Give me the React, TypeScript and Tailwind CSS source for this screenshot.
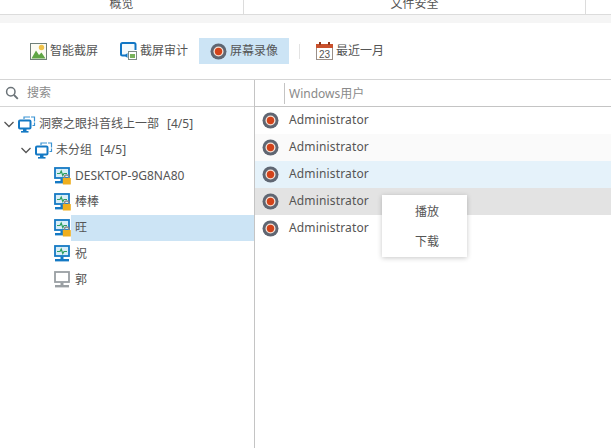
const font = { fontFamily: '"Noto Sans", "Noto Sans CJK SC", sans-serif' };

function PictureIcon() {
  return (
    <svg width="17" height="17" viewBox="0 0 17 17">
      <rect x="0.5" y="0.5" width="16" height="16" fill="#fbfbf3" stroke="#6f7f78" />
      <circle cx="11.5" cy="4.5" r="2.7" fill="#efc24b" />
      <path d="M1.5 15.5 L6 7.5 L9 12 L11.5 9.5 L15.5 15.5 Z" fill="#5fa544" />
    </svg>
  );
}

function AuditIcon() {
  return (
    <svg width="17" height="18" viewBox="0 0 17 18">
      <path d="M7 13.5 H2.5 Q1 13.5 1 12 V2.5 Q1 1 2.5 1 H14 Q15.5 1 15.5 2.5 V8" fill="#f4fafd" stroke="#1176c4" strokeWidth="2" />
      <path d="M4.5 13.5 L7.5 11 V16 Z" fill="#1176c4" />
      <rect x="8.5" y="9.5" width="8" height="8" fill="#fff" stroke="#7d8c84" />
      <rect x="10" y="12" width="5" height="4" fill="#79b35c" />
    </svg>
  );
}

function RecordIcon() {
  return (
    <svg width="17" height="17" viewBox="0 0 17 17">
      <circle cx="8.5" cy="8.5" r="8" fill="#5f6672" />
      <circle cx="8.5" cy="8.5" r="5" fill="#f6e3d8" />
      <circle cx="8.5" cy="8.5" r="3.7" fill="#d2431a" />
    </svg>
  );
}

function CalendarIcon() {
  return (
    <svg width="17" height="18" viewBox="0 0 17 18">
      <rect x="0.5" y="2.5" width="16" height="15" fill="#fff" stroke="#9a8f88" />
      <rect x="0" y="2" width="17" height="4" fill="#c9502c" />
      <rect x="3" y="0" width="2" height="3" fill="#8f3a20" />
      <rect x="12" y="0" width="2" height="3" fill="#8f3a20" />
      <text x="8.5" y="15.5" textAnchor="middle" fontSize="10" fill="#555" fontFamily="Liberation Sans, sans-serif">23</text>
    </svg>
  );
}

function GroupIcon() {
  return (
    <svg width="18" height="17" viewBox="0 0 18 17">
      <path d="M6 3 V1 H16.5 V9.5 H14.5" fill="none" stroke="#3a93d3" strokeWidth="1.2" strokeDasharray="8 1" />
      <rect x="1" y="4.5" width="11.5" height="8" rx="1" fill="#fff" stroke="#1479c4" strokeWidth="2" />
      <rect x="5" y="13" width="3.5" height="2" fill="#1479c4" />
      <rect x="3" y="15" width="7.5" height="1.6" fill="#1479c4" />
    </svg>
  );
}

function HostIcon({ locked = false, offline = false }: { locked?: boolean; offline?: boolean }) {
  const c = offline ? "#9a9fa3" : "#1479c4";
  return (
    <svg width="18" height="18" viewBox="0 0 18 18">
      <rect x="1" y="1" width="14" height="10" fill={offline ? "#fff" : "#d9eef8"} stroke={c} strokeWidth="1.8" />
      {!offline && <path d="M3 6.5 H6 L7.2 4 L8.8 8.5 L10 6.5 H13" fill="none" stroke="#2f9f63" strokeWidth="1.2" />}
      <rect x="6.5" y="11.5" width="3" height="2.5" fill={c} />
      <rect x="1" y="14" width="14" height="2.4" fill={c} />
      {locked && (
        <g>
          <path d="M10.5 11.5 V10 Q10.5 8 12.7 8 Q14.9 8 14.9 10 V11.5" fill="none" stroke="#8a8a8a" strokeWidth="1.4" />
          <rect x="8.8" y="11" width="8" height="6.6" rx="0.5" fill="#eeae1e" />
        </g>
      )}
    </svg>
  );
}

function Chevron() {
  return (
    <svg width="12" height="12" viewBox="0 0 12 12">
      <path d="M1.5 4 L6 8.5 L10.5 4" fill="none" stroke="#555" strokeWidth="1.3" />
    </svg>
  );
}

function SearchIcon() {
  return (
    <svg width="14" height="14" viewBox="0 0 14 14">
      <circle cx="5.8" cy="5.8" r="4.2" fill="none" stroke="#6b7378" strokeWidth="1.5" />
      <path d="M9 9 L12.8 12.8" stroke="#6b7378" strokeWidth="1.8" />
    </svg>
  );
}

const hosts = [
  { name: "DESKTOP-9G8NA80", locked: true },
  { name: "棒棒", locked: true },
  { name: "旺", locked: true, selected: true },
  { name: "祝" },
  { name: "郭", offline: true },
];

const rowColors = ["bg-white", "bg-[#fafafa]", "bg-[#e5f2fa]", "bg-[#e3e3e3]", "bg-white"];

export default function App() {
  return (
    <div className="relative flex h-[448px] w-[611px] flex-col overflow-hidden bg-white text-[12px] text-[#555]" style={font}>
      <div className="flex h-[15px] shrink-0 items-end overflow-hidden border-b border-[#dcdcdc] text-[#555]">
        <div className="flex h-[14px] w-[244px] items-end justify-center border-r border-[#dcdcdc] pb-[1px] leading-[18px]">概览</div>
        <div className="flex h-[14px] w-[342px] items-end justify-center border-r border-[#dcdcdc] pb-[1px] leading-[18px]">文件安全</div>
      </div>
      <div className="h-[8px] shrink-0 bg-[#f5f5f5]" />

      <div className="flex h-[57px] shrink-0 items-center border-b border-[#d5d5d5] pl-[20px]">
        <div className="flex h-[26px] items-center gap-[3px] pl-[10px] pr-[12px]"><PictureIcon />智能截屏</div>
        <div className="flex h-[26px] items-center gap-[3px] pl-[10px] pr-[11px]"><AuditIcon />截屏审计</div>
        <div className="flex h-[26px] w-[90px] items-center gap-[3px] bg-[#cce4f5] pl-[11px]"><RecordIcon />屏幕录像</div>
        <div className="ml-[10px] h-[15px] w-px bg-[#e3e3e3]" />
        <div className="flex h-[26px] items-center gap-[3px] pl-[16px]"><CalendarIcon />最近一月</div>
      </div>

      <div className="flex min-h-0 flex-1">
        <div className="flex w-[255px] shrink-0 flex-col border-r border-[#c4c4c4]">
          <div className="flex h-[27px] shrink-0 items-center gap-[8px] border-b border-[#d5d5d5] pl-[5px] text-[#8a8a8a]">
            <SearchIcon />搜索
          </div>
          <div className="pt-[4px]">
            <div className="flex h-[26px] items-center pl-[3px]">
              <Chevron />
              <span className="ml-[3px] mr-[3px] flex"><GroupIcon /></span>
              <span>洞察之眼抖音线上一部</span>
              <span className="ml-[8px]">[4/5]</span>
            </div>
            <div className="flex h-[26px] items-center pl-[20px]">
              <Chevron />
              <span className="ml-[3px] mr-[3px] flex"><GroupIcon /></span>
              <span>未分组</span>
              <span className="ml-[8px]">[4/5]</span>
            </div>
            {hosts.map((h) => (
              <div key={h.name} className="flex h-[26px] items-center pl-[54px]">
                <HostIcon locked={h.locked} offline={h.offline} />
                <span className={`ml-[-1px] flex h-full flex-1 items-center pl-[4px] ${h.selected ? "bg-[#cce4f5]" : ""}`}>{h.name}</span>
              </div>
            ))}
          </div>
        </div>

        <div className="min-w-0 flex-1">
          <div className="flex h-[27px] items-center border-b border-[#c4c4c4] pl-[29px] text-[#8a8a8a]">
            <span className="flex h-[21px] items-center border-l border-[#c4c4c4] pl-[4px] pt-[1px]">Windows用户</span>
          </div>
          {rowColors.map((bg, i) => (
            <div key={i} className={`flex h-[27px] items-center pl-[7px] ${bg}`}>
              <RecordIcon />
              <span className="ml-[10px] pb-[2px] tracking-[0.15px]">Administrator</span>
            </div>
          ))}
        </div>
      </div>

      <div className="absolute left-[382px] top-[195px] flex h-[62px] w-[85px] flex-col items-center justify-center gap-[12px] bg-white pl-[5px] pt-[2px] text-[12px] leading-[18px] shadow-[0_1px_5px_rgba(0,0,0,0.22)]">
        <span>播放</span>
        <span>下载</span>
      </div>
    </div>
  );
}
